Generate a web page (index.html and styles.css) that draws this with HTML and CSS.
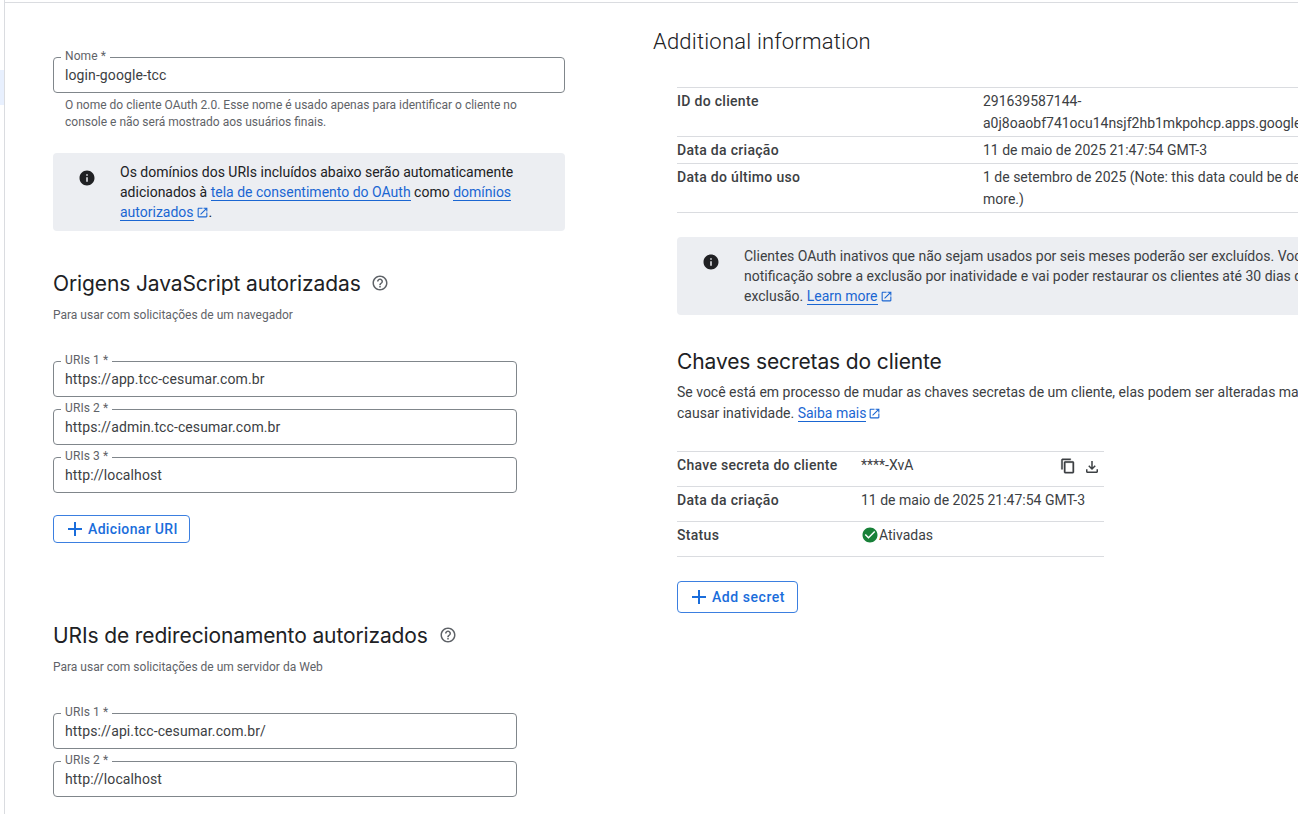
FILE: index.html
```html
<!DOCTYPE html>
<html lang="pt-BR">
<head>
    <meta charset="UTF-8">
    <meta name="viewport" content="width=device-width, initial-scale=1.0">
    <title>login-google-tcc</title>
    <link rel="stylesheet" href="styles.css">
</head>
<body>
    <svg class="defs" width="0" height="0">
        <symbol id="i-info" viewBox="0 0 24 24"><path d="M12 2C6.48 2 2 6.48 2 12s4.48 10 10 10 10-4.48 10-10S17.52 2 12 2zm1 15h-2v-6h2v6zm0-8h-2V7h2v2z"/></symbol>
        <symbol id="i-help" viewBox="0 0 24 24"><path d="M11 18h2v-2h-2v2zm1-16C6.48 2 2 6.48 2 12s4.48 10 10 10 10-4.48 10-10S17.52 2 12 2zm0 18c-4.41 0-8-3.59-8-8s3.59-8 8-8 8 3.59 8 8-3.59 8-8 8zm0-14c-2.21 0-4 1.79-4 4h2c0-1.1.9-2 2-2s2 .9 2 2c0 2-3 1.75-3 5h2c0-2.25 3-2.5 3-5 0-2.21-1.79-4-4-4z"/></symbol>
        <symbol id="i-open" viewBox="0 0 24 24"><path d="M19 19H5V5h7V3H5c-1.11 0-2 .9-2 2v14c0 1.1.89 2 2 2h14c1.1 0 2-.9 2-2v-7h-2v7zM14 3v2h3.59l-9.83 9.83 1.41 1.41L19 6.41V10h2V3h-7z"/></symbol>
        <symbol id="i-plus" viewBox="5 5 14 14"><path d="M19 13h-6v6h-2v-6H5v-2h6V5h2v6h6v2z"/></symbol>
        <symbol id="i-copy" viewBox="0 0 24 24"><path d="M16 1H4c-1.1 0-2 .9-2 2v14h2V3h12V1zm3 4H8c-1.1 0-2 .9-2 2v14c0 1.1.9 2 2 2h11c1.1 0 2-.9 2-2V7c0-1.1-.9-2-2-2zm0 16H8V7h11v14z"/></symbol>
        <symbol id="i-download" viewBox="0 0 24 24"><path d="M18 15v3H6v-3H4v3c0 1.1.9 2 2 2h12c1.1 0 2-.9 2-2v-3h-2zm-1-4-1.41-1.41L13 12.17V4h-2v8.17L8.41 9.59 7 11l5 5 5-5z"/></symbol>
        <symbol id="i-check" viewBox="0 0 24 24"><path d="M12 2C6.48 2 2 6.48 2 12s4.48 10 10 10 10-4.48 10-10S17.52 2 12 2zm-2 15l-5-5 1.41-1.41L10 14.17l7.59-7.59L19 8l-9 9z"/></symbol>
    </svg>

    <div class="app">
        <aside class="rail"><div class="rail-item"></div></aside>

        <main class="main">
            <section class="form-col">
                <div class="field field-wide">
                    <span class="field-label">Nome *</span>
                    <input class="field-input" type="text" value="login-google-tcc">
                </div>
                <p class="hint">O nome do cliente OAuth 2.0. Esse nome é usado apenas para identificar o cliente no<br>console e não será mostrado aos usuários finais.</p>

                <div class="notice notice-form">
                    <svg class="notice-icon"><use href="#i-info"/></svg>
                    <p>Os domínios dos URIs incluídos abaixo serão automaticamente<br>adicionados à <a href="#">tela de consentimento do OAuth</a> como <a href="#">domínios<br>autorizados</a><svg class="ext"><use href="#i-open"/></svg>.</p>
                </div>

                <h2 class="section-title title-origins">Origens JavaScript autorizadas <svg class="help"><use href="#i-help"/></svg></h2>
                <p class="section-sub">Para usar com solicitações de um navegador</p>

                <div class="uri-list">
                    <div class="field">
                        <span class="field-label">URIs 1 *</span>
                        <input class="field-input" type="text" value="https://app.tcc-cesumar.com.br">
                    </div>
                    <div class="field">
                        <span class="field-label">URIs 2 *</span>
                        <input class="field-input" type="text" value="https://admin.tcc-cesumar.com.br">
                    </div>
                    <div class="field">
                        <span class="field-label">URIs 3 *</span>
                        <input class="field-input" type="text" value="http://localhost">
                    </div>
                </div>
                <button class="btn btn-uri"><svg><use href="#i-plus"/></svg>Adicionar URI</button>

                <h2 class="section-title title-redirect">URIs de redirecionamento autorizados <svg class="help"><use href="#i-help"/></svg></h2>
                <p class="section-sub">Para usar com solicitações de um servidor da Web</p>

                <div class="uri-list">
                    <div class="field">
                        <span class="field-label">URIs 1 *</span>
                        <input class="field-input" type="text" value="https://api.tcc-cesumar.com.br/">
                    </div>
                    <div class="field">
                        <span class="field-label">URIs 2 *</span>
                        <input class="field-input" type="text" value="http://localhost">
                    </div>
                </div>
            </section>

            <section class="info-col">
                <h2 class="info-title">Additional information</h2>

                <div class="info-body">
                    <table class="info-table">
                        <tr>
                            <th>ID do cliente</th>
                            <td>291639587144-<br>a0j8oaobf741ocu14nsjf2hb1mkpohcp.apps.googleusercontent.com</td>
                        </tr>
                        <tr>
                            <th>Data da criação</th>
                            <td>11 de maio de 2025 21:47:54 GMT-3</td>
                        </tr>
                        <tr>
                            <th>Data do último uso</th>
                            <td>1 de setembro de 2025 (Note: this data could be delayed by a few hours. Learn<br>more.)</td>
                        </tr>
                    </table>

                    <div class="notice notice-info">
                        <svg class="notice-icon"><use href="#i-info"/></svg>
                        <p>Clientes OAuth inativos que não sejam usados por seis meses poderão ser excluídos. Você vai receber uma<br>notificação sobre a exclusão por inatividade e vai poder restaurar os clientes até 30 dias depois da<br>exclusão. <a href="#">Learn more</a><svg class="ext"><use href="#i-open"/></svg></p>
                    </div>

                    <h2 class="section-title title-secrets">Chaves secretas do cliente</h2>
                    <p class="secrets-text">Se você está em processo de mudar as chaves secretas de um cliente, elas podem ser alteradas manualmente sem<br>causar inatividade. <a href="#">Saiba mais</a><svg class="ext"><use href="#i-open"/></svg></p>

                    <table class="secret-table">
                        <tr>
                            <th>Chave secreta do cliente</th>
                            <td>
                                <div class="secret-value">
                                    <span>****-XvA</span>
                                    <span class="secret-actions">
                                        <svg class="icon-copy"><use href="#i-copy"/></svg>
                                        <svg class="icon-download"><use href="#i-download"/></svg>
                                    </span>
                                </div>
                            </td>
                        </tr>
                        <tr>
                            <th>Data da criação</th>
                            <td>11 de maio de 2025 21:47:54 GMT-3</td>
                        </tr>
                        <tr>
                            <th>Status</th>
                            <td><span class="status"><svg><use href="#i-check"/></svg>Ativadas</span></td>
                        </tr>
                    </table>

                    <button class="btn btn-secret"><svg><use href="#i-plus"/></svg>Add secret</button>
                </div>
            </section>
        </main>
    </div>
</body>
</html>
```

FILE: styles.css
```css
html, body {
    margin: 0;
    height: 814px;
    overflow: hidden;
    background-color: #fff;
}
body {
    font-family: Roboto, Arial, sans-serif;
    font-size: 14px;
    line-height: 20px;
    color: #3c4043;
}
.defs {
    display: block;
    height: 0;
}
a {
    color: #1a66d2;
    text-decoration: none;
    border-bottom: 1px solid #1a66d2;
}
p {
    margin: 0;
}

.app {
    display: flex;
    height: 814px;
}
.rail {
    flex: 0 0 4px;
    padding-top: 70px;
    border-right: 1px solid #dadce0;
}
.rail-item {
    height: 35px;
    background-color: #e8f0fe;
}
.main {
    flex: 1;
    display: flex;
    min-width: 0;
    margin-top: 2px;
    border-top: 1px solid #dadce0;
}

/* left column */
.form-col {
    flex: 0 0 512px;
    padding: 54px 0 0 48px;
}
.field {
    position: relative;
    width: 464px;
    height: 36px;
}
.field-wide {
    width: 512px;
}
.field-label {
    position: absolute;
    top: -9px;
    left: 8px;
    padding: 0 4px;
    font-size: 12px;
    line-height: 16px;
    letter-spacing: .1px;
    color: #5f6368;
    background-color: #fff;
}
.field-input {
    width: 100%;
    height: 100%;
    box-sizing: border-box;
    padding: 0 11px;
    border: 1px solid #80868b;
    border-radius: 4px;
    font-family: inherit;
    font-size: 14px;
    letter-spacing: .1px;
    color: #3c4043;
    background: none;
}
.hint {
    margin-top: 4px;
    padding-left: 12px;
    font-size: 12px;
    line-height: 17px;
    color: #5f6368;
}
.notice {
    display: flex;
    box-sizing: border-box;
    background-color: #eceef2;
    border-radius: 4px;
    color: #202124;
}
.notice-icon {
    flex: none;
    width: 18px;
    height: 18px;
    color: #202124;
    fill: currentColor;
}
.notice-form {
    width: 512px;
    height: 78px;
    margin-top: 22px;
    padding: 9px 0 0 25px;
}
.notice-form .notice-icon {
    margin: 7px 24px 0 0;
}
.ext {
    width: 13px;
    height: 13px;
    margin-left: 2px;
    vertical-align: -2px;
    fill: #1a66d2;
}
.section-title {
    margin: 0;
    font-family: Inter, Roboto, sans-serif;
    font-size: 21px;
    line-height: 28px;
    letter-spacing: -.12px;
    font-weight: 400;
    color: #202124;
}
.help {
    width: 18px;
    height: 18px;
    margin-left: 5px;
    vertical-align: -1px;
    fill: #5f6368;
}
.title-origins {
    margin-top: 39px;
}
.title-redirect {
    margin-top: 79px;
}
.section-sub {
    margin-top: 9px;
    font-size: 12px;
    line-height: 16px;
    color: #5f6368;
}
.uri-list {
    display: flex;
    flex-direction: column;
    gap: 12px;
    margin-top: 38px;
}
.btn {
    display: flex;
    align-items: center;
    box-sizing: border-box;
    border: 1px solid #3b7fe0;
    border-radius: 4px;
    background: #fff;
    color: #1a6ddb;
    font-family: inherit;
    font-size: 14px;
    font-weight: 500;
    letter-spacing: .35px;
}
.btn svg {
    width: 14px;
    height: 14px;
    margin-right: 6px;
    fill: currentColor;
}
.btn-uri {
    width: 137px;
    height: 28px;
    margin-top: 22px;
    padding: 0 0 0 14px;
}
.btn-secret {
    width: 121px;
    height: 32px;
    margin-top: 24px;
    padding: 0 0 0 14px;
    letter-spacing: .55px;
}

/* right column */
.info-col {
    flex: none;
    width: 700px;
    margin-left: 88px;
    padding-top: 23px;
}
.info-title {
    margin: 0;
    font-family: Roboto, sans-serif;
    font-size: 22px;
    line-height: 32px;
    letter-spacing: .2px;
    font-weight: 300;
    color: #202124;
}
.info-body {
    padding: 29px 0 0 24px;
}
table {
    border-collapse: collapse;
    table-layout: fixed;
}
th {
    font-weight: 500;
    letter-spacing: .3px;
    text-align: left;
    vertical-align: top;
    color: #3c4043;
}
td {
    white-space: nowrap;
}
.info-table {
    width: 676px;
    border-top: 1px solid #dadce0;
}
.info-table tr {
    border-bottom: 1px solid #dadce0;
}
.info-table th, .info-table td {
    padding: 2px 0;
    line-height: 22px;
}
.info-table th {
    width: 306px;
}
.notice-info {
    width: 676px;
    height: 78px;
    margin-top: 24px;
    padding: 9px 0 0 25px;
    color: #3c4043;
    white-space: nowrap;
}
.notice-info .notice-icon {
    margin: 7px 24px 0 0;
}
.title-secrets {
    margin-top: 33px;
}
.secrets-text {
    margin-top: 6px;
    line-height: 21px;
    white-space: nowrap;
}
.secret-table {
    width: 427px;
    margin-top: 27px;
    border-top: 1px solid #dadce0;
}
.secret-table tr {
    border-bottom: 1px solid #dadce0;
}
.secret-table th, .secret-table td {
    height: 35px;
    padding: 3px 0 0;
    box-sizing: border-box;
    vertical-align: top;
}
.secret-table th {
    width: 184px;
}
.secret-value {
    display: flex;
    justify-content: space-between;
}
.secret-actions {
    display: flex;
    align-items: flex-start;
    gap: 7px;
    padding: 3px 3px 0 0;
}
.secret-actions svg {
    fill: #3c4043;
}
.secret-actions .icon-copy {
    width: 16px;
    height: 16px;
    stroke: #3c4043;
    stroke-width: .6;
}
.secret-actions .icon-download {
    width: 18px;
    height: 18px;
}
.status {
    display: flex;
    align-items: center;
}
.status svg {
    width: 18px;
    height: 18px;
    fill: #188038;
}
```
